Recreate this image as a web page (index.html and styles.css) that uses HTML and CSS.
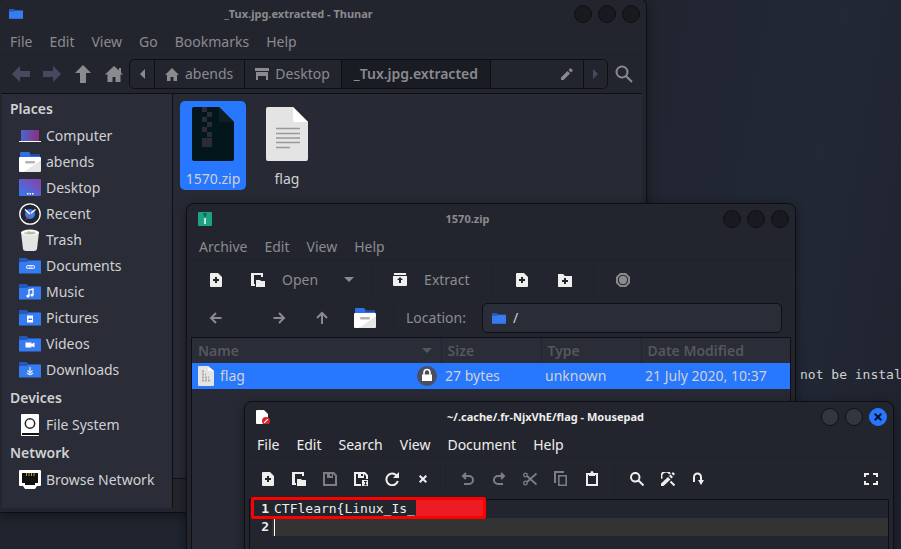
FILE: index.html
```html
<!DOCTYPE html>
<html lang="en">
<head>
<meta charset="utf-8">
<title>Desktop</title>
<link rel="stylesheet" href="styles.css">
</head>
<body>
<svg class="defs" aria-hidden="true">
  <defs>
    <linearGradient id="purple" x1="0" y1="1" x2="1" y2="0"><stop offset="0" stop-color="#367bf0"/><stop offset="1" stop-color="#8a3fa8"/></linearGradient>
    <linearGradient id="magenta" x1="0" y1="0" x2="1" y2="0"><stop offset="0" stop-color="#4a66d0"/><stop offset="1" stop-color="#8c2f7c"/></linearGradient>
    <linearGradient id="drawer" x1="0" y1="0" x2="1" y2="1"><stop offset=".6" stop-color="#fff"/><stop offset=".61" stop-color="#e6e6e6"/></linearGradient>
  </defs>
  <symbol id="folder" viewBox="0 0 22 16"><path d="M0 1q0-1 1-1h6.500l2 2H21q1 0 1 1v12H0z" fill="#2458ba"/><path d="M1 4h6.500l2-1H22v12.500H0V5z" fill="#367bf0"/></symbol>
  <symbol id="home-folder" viewBox="0 0 22 20"><path d="M1 6V1q0-1 1-1h8q1 0 1.500 2.500H21V6z" fill="#2f70e6"/><path d="M11 3h10v1H11z" fill="#1f4ea8"/><rect y="5" width="22" height="15" rx="1" fill="url(#drawer)"/><rect x="6" y="9" width="10" height="2.500" rx="1" fill="#b4b4b4"/></symbol>
  <symbol id="new" viewBox="0 0 14 14"><path fill-rule="evenodd" d="M2 0h7l4 4v9q0 1-1 1H2q-1 0-1-1V1q0-1 1-1zM6 4v2H4v2h2v2h2V8h2V6H8V4z"/></symbol>
  <symbol id="open" viewBox="0 0 14 14"><path d="M0 0h12v4h-2V2H3v9h1v2H0z"/><path d="M5 7h4l1 1h4v6H5z"/></symbol>
  <symbol id="left" viewBox="0 0 14 14"><path d="M12.500 7H2.500M7 2L2 7l5 5" fill="none" stroke="currentColor" stroke-width="2"/></symbol>
  <symbol id="home" viewBox="0 0 18 16"><path d="M9 0l5 4.500V2h2v4.500L18 8.500h-2.500V16h-5v-5h-3v5h-5V8.500H0z"/></symbol>
  <symbol id="arrow" viewBox="0 0 18 16"><path d="M0 8l8-8v5h10v6H8v5z"/></symbol>
  <symbol id="undo" viewBox="0 0 14 14"><path d="M2 4h6a4 4 0 0 1 0 8H3M5 1L2 4l3 3" fill="none" stroke="currentColor" stroke-width="2"/></symbol>
</svg>

<main class="desktop">
  <p class="terminal">not be instal</p>

  <section class="window files">
    <header class="titlebar">
      <svg class="app" viewBox="0 -3 22 22"><use href="#folder" width="22" height="16"/></svg>
      <h1>_Tux.jpg.extracted - Thunar</h1>
      <div class="controls"><button aria-label="Minimize"></button><button aria-label="Maximize"></button><button aria-label="Close"></button></div>
    </header>
    <nav class="menubar"><button>File</button><button>Edit</button><button>View</button><button>Go</button><button>Bookmarks</button><button>Help</button></nav>
    <div class="toolbar navbar">
      <button class="tool off" aria-label="Back"><svg width="18" height="16"><use href="#arrow"/></svg></button>
      <button class="tool off" aria-label="Forward"><svg width="18" height="16" viewBox="0 0 18 16"><path d="M18 8l-8-8v5H0v6h10v5z"/></svg></button>
      <button class="tool" aria-label="Up"><svg width="16" height="18" viewBox="0 0 16 18"><path d="M8 0l8 8h-5v10H5V8H0z"/></svg></button>
      <button class="tool" aria-label="Home"><svg width="18" height="16"><use href="#home"/></svg></button>
      <div class="pathbar">
        <button class="step" aria-label="Scroll left"><svg width="5" height="10" viewBox="0 0 5 10"><path d="M5 0v10L0 5z"/></svg></button>
        <button class="crumb"><svg width="14" height="13" viewBox="0 0 14 13"><path d="M7 0l7 7h-2v6H8.500V9h-3v4H2V7H0z"/></svg>abends</button>
        <button class="crumb"><svg width="14" height="12" viewBox="0 0 14 12"><path d="M0 0h14v3H0zM1 4h12v8h-2V8H3v4H1z"/></svg>Desktop</button>
        <button class="crumb current">_Tux.jpg.extracted</button>
        <button class="edit" aria-label="Edit path"><svg width="12" height="12" viewBox="0 0 12 12"><path d="M0 9.500V12h2.500L9 5.500 6.500 3zM7.500 2L9 .5q.5-.5 1 0L11.500 2q.5.500 0 1L10 4.500z"/></svg></button>
        <button class="step dim" aria-label="Scroll right"><svg width="5" height="10" viewBox="0 0 5 10"><path d="M0 0v10l5-5z"/></svg></button>
      </div>
      <button class="tool" aria-label="Search"><svg width="18" height="18" viewBox="0 0 18 18"><path d="M11.500 11.500L17 17M12.500 7A5.500 5.500 0 1 1 1.500 7 5.500 5.500 0 0 1 12.500 7z" fill="none" stroke="currentColor" stroke-width="2"/></svg></button>
    </div>
    <div class="browser">
      <aside class="sidebar">
        <h2>Places</h2>
        <a href="#"><svg viewBox="0 0 22 22"><path d="M2 5h18v11H2z" fill="url(#magenta)"/><path d="M0 16h22v1H0z" fill="#fff"/></svg>Computer</a>
        <a href="#"><svg viewBox="0 0 22 22"><use href="#home-folder" y="1" width="22" height="20"/></svg>abends</a>
        <a href="#"><svg viewBox="0 0 22 22"><rect y="2" width="22" height="17" rx="1" fill="url(#purple)"/><path d="M8 16h1.500v1.500H8zM10.500 16H12v1.500h-1.500zM13 16h1.500v1.500H13z" fill="#fff"/></svg>Desktop</a>
        <a href="#"><svg viewBox="0 0 22 22"><circle cx="11" cy="11" r="10.200" fill="#23252e" stroke="#fff" stroke-width="1.300"/><circle cx="11" cy="11" r="5" fill="#367bf0"/><path d="M6 6.500l5 4.500 5.500-4.500" stroke="#fff" stroke-width="1.500" fill="none"/><path d="M12 10l-5 7" stroke="#d33"/></svg>Recent</a>
        <a href="#"><svg viewBox="0 0 22 22"><path d="M2 3l2 17q.3 2 3 2h8q2.700 0 3-2l2-17z" fill="#e4e4e4"/><ellipse cx="11" cy="3.500" rx="9" ry="3" fill="#f8f8f8"/><path d="M5 4.500q1-2 3-1l1-1.500 3 1 3-.5 2 2q-6 2-12 0z" fill="#b8bfa8"/></svg>Trash</a>
        <a href="#"><svg viewBox="0 0 22 22"><use href="#folder" y="3" width="22" height="16"/><path d="M14 10.500H9q-1.500 0-1.500 1.500T9 13.500h5q1.500 0 1.500-1.500T14 10.500M9.500 12h4" fill="none" stroke="#dce8fc" stroke-width="1.200"/></svg>Documents</a>
        <a href="#"><svg viewBox="0 0 22 22"><use href="#folder" y="3" width="22" height="16"/><path d="M10 15V9l4-1v6" fill="none" stroke="#fff" stroke-width="1.300"/><circle cx="9" cy="15" r="1.600" fill="#fff"/><circle cx="13" cy="14" r="1.600" fill="#fff"/></svg>Music</a>
        <a href="#"><svg viewBox="0 0 22 22"><use href="#folder" y="3" width="22" height="16"/><path d="M8 8.500h6v7H8z" fill="#fff"/><path d="M9 13l1.500-2 1 1 1-1 .8 2z" fill="#367bf0"/></svg>Pictures</a>
        <a href="#"><svg viewBox="0 0 22 22"><use href="#folder" y="3" width="22" height="16"/><path d="M6.500 9.500h6v1.500l3-1.500v5l-3-1.500v1.500h-6z" fill="#fff"/></svg>Videos</a>
        <a href="#"><svg viewBox="0 0 22 22"><use href="#folder" y="3" width="22" height="16"/><path d="M11 8v6M8.500 11.500L11 14l2.500-2.500M8 14q3 3 6 0" fill="none" stroke="#dce8fc" stroke-width="1.200"/></svg>Downloads</a>
        <h2>Devices</h2>
        <a href="#"><svg viewBox="0 0 22 22"><rect x="2" y="0" width="18" height="22" rx="1" fill="#fff"/><path d="M3 19h17v2H3z" fill="#111"/><circle cx="11" cy="9.500" r="4.700" fill="none" stroke="#222" stroke-width="1.500"/></svg>File System</a>
        <h2>Network</h2>
        <a href="#"><svg viewBox="0 0 22 22"><path d="M1 1h20q1 0 1 1v14q0 1-1 1h-3l-2 3H6l-2-3H1q-1 0-1-1V2q0-1 1-1z" fill="#fff"/><path d="M3 4h16v10h-3v2H6v-2H3z" fill="#111"/><path d="M7.500 4v3M10 4v3M12.500 4v3M15 4v3" stroke="#b8974f"/></svg>Browse Network</a>
      </aside>
      <div class="content">
        <div class="icons">
          <figure class="selected">
            <svg width="42" height="54" viewBox="0 0 42 54"><path d="M2 0h25l15 15v37q0 2-2 2H2q-2 0-2-2V2q0-2 2-2z" fill="#03161c"/><path d="M27 0l15 15H27z" fill="#0e2024"/><path d="M10 0h5v5h-5zM15 5h5v5h-5zM10 10h5v5h-5zM15 15h5v5h-5zM10 20h5v5h-5zM15 25h5v5h-5zM10 31h10v9H10z" fill="#2b2c38"/></svg>
            <figcaption>1570.zip</figcaption>
          </figure>
          <figure>
            <svg width="42" height="54" viewBox="0 0 42 54"><path d="M2 0h25l15 15v37q0 2-2 2H2q-2 0-2-2V2q0-2 2-2z" fill="#e4e4e4"/><path d="M27 0l15 15H29q-2 0-2-2z" fill="#fff"/><path d="M10 21.500h24M10 26.500h24M10 31h24M10 35.500h24M10 40.500h14" stroke="#999" stroke-width="1.300"/></svg>
            <figcaption>flag</figcaption>
          </figure>
        </div>
        <div class="status"></div>
      </div>
    </div>
  </section>

  <section class="window archive">
    <header class="titlebar">
      <svg class="app" viewBox="0 0 14 14"><rect width="14" height="14" rx="1" fill="#1fa184"/><path d="M5 1h4L7.500 5h-1z" fill="#0d6b58"/><path d="M6 6h2v6H6z" fill="#bfe8dc"/></svg>
      <h1>1570.zip</h1>
      <div class="controls"><button aria-label="Minimize"></button><button aria-label="Maximize"></button><button aria-label="Close"></button></div>
    </header>
    <nav class="menubar"><button>Archive</button><button>Edit</button><button>View</button><button>Help</button></nav>
    <div class="toolbar actions">
      <button class="tool bright" aria-label="New archive"><svg width="14" height="14"><use href="#new"/></svg></button>
      <button class="labelled"><svg width="14" height="14"><use href="#open"/></svg>Open</button>
      <button class="tool drop" aria-label="Recent archives"><svg width="10" height="5" viewBox="0 0 10 5"><path d="M0 0h10L5 5z"/></svg></button>
      <span class="sep"></span>
      <button class="labelled"><svg width="14" height="14" viewBox="0 0 14 14"><path fill-rule="evenodd" d="M1 0h12v2H1zM0 3h14v9q0 1-1 1H1q-1 0-1-1zM7 4L4 7h2v3h2V7h2z"/></svg>Extract</button>
      <span class="sep"></span>
      <button class="tool bright" aria-label="Add files"><svg width="14" height="14"><use href="#new"/></svg></button>
      <button class="tool bright" aria-label="Add folder"><svg width="14" height="14" viewBox="0 0 14 14"><path fill-rule="evenodd" d="M0 1h5l2 2h7v11H0zM6 5v2H4v2h2v2h2V9h2V7H8V5z"/></svg></button>
      <span class="sep"></span>
      <button class="tool" aria-label="Stop"><svg width="14" height="14" viewBox="0 0 14 14"><path fill-rule="evenodd" d="M4 0h6l4 4v6l-4 4H4l-4-4V4zM7 1.800a5.200 5.200 0 1 0 0 10.400A5.200 5.200 0 0 0 7 1.800z"/><circle cx="7" cy="7" r="4.200"/></svg></button>
    </div>
    <div class="toolbar location">
      <button class="tool back" aria-label="Back"><svg width="14" height="14"><use href="#left"/></svg></button>
      <button class="tool" aria-label="Forward"><svg width="14" height="14" viewBox="0 0 14 14"><path d="M1.500 7h10M7 2l5 5-5 5" fill="none" stroke="currentColor" stroke-width="2"/></svg></button>
      <button class="tool" aria-label="Up"><svg width="14" height="14" viewBox="0 0 14 14"><path d="M7 13V2M2 7l5-5 5 5" fill="none" stroke="currentColor" stroke-width="2"/></svg></button>
      <button class="tool" aria-label="Home"><svg width="22" height="20"><use href="#home-folder"/></svg></button>
      <span class="sep"></span>
      <label for="location">Location:</label>
      <div class="field"><svg width="14" height="11" viewBox="0 0 22 16" preserveAspectRatio="none"><use href="#folder" width="22" height="16"/></svg><input id="location" type="text" value="/"></div>
    </div>
    <div class="listing">
      <table>
        <colgroup><col><col class="narrow"><col class="narrow"><col class="date"></colgroup>
        <thead><tr><th><div class="cell">Name<svg width="10" height="5" viewBox="0 0 10 5"><path d="M0 0h10L5 5z"/></svg></div></th><th>Size</th><th>Type</th><th>Date Modified</th></tr></thead>
        <tbody><tr>
          <td class="name"><div class="cell"><svg width="16" height="20" viewBox="0 0 16 20"><path d="M1 0h9l6 5v14q0 1-1 1H1q-1 0-1-1V1q0-1 1-1z" fill="#e4e4e4"/><path d="M10 0l6 5h-6z" fill="#fff"/><path d="M4 5.500h2M4 8.500h4M4 11.500h7M4 14.500h8" stroke="#aaa" stroke-dasharray="2 1" stroke-width="2"/></svg><span>flag</span><svg class="lock" width="20" height="20" viewBox="0 0 20 20"><circle cx="10" cy="10" r="10" fill="#4a4e5e"/><path d="M7 9V6.500a3 3 0 0 1 6 0V9" fill="none" stroke="#fff" stroke-width="1.600"/><path d="M5 8.500h10V15H5z" fill="#fff"/></svg></div></td>
          <td>27 bytes</td><td>unknown</td><td>21 July 2020, 10:37</td>
        </tr></tbody>
      </table>
    </div>
  </section>

  <section class="window editor">
    <header class="titlebar">
      <svg class="app" viewBox="0 0 14 14"><path d="M1 0h7l4 4v10H1q-1 0-1-1V1q0-1 1-1z" fill="#fff"/><circle cx="10" cy="11" r="4" fill="#d8232a"/><path d="M8.200 12.800l3.600-3.600" stroke="#fff" stroke-width="1.200"/></svg>
      <h1>~/.cache/.fr-NjxVhE/flag - Mousepad</h1>
      <div class="controls"><button aria-label="Minimize"></button><button aria-label="Maximize"></button><button class="close" aria-label="Close"><svg width="8" height="8" viewBox="0 0 8 8"><path d="M.7.700l6.600 6.600M7.300.700L.7 7.300" stroke="#0b1226" stroke-width="2"/></svg></button></div>
    </header>
    <nav class="menubar"><button>File</button><button>Edit</button><button>Search</button><button>View</button><button>Document</button><button>Help</button></nav>
    <div class="toolbar">
      <button class="tool" aria-label="New"><svg width="14" height="14"><use href="#new"/></svg></button>
      <button class="tool" aria-label="Open"><svg width="14" height="14"><use href="#open"/></svg></button>
      <button class="tool off" aria-label="Save"><svg width="14" height="14" viewBox="0 0 14 14"><path fill-rule="evenodd" d="M0 0h11l3 3v11H0zM2 2v10h10V4l-2-2v4H4V2zM7 2v2h2V2z"/></svg></button>
      <button class="tool" aria-label="Save as"><svg width="14" height="14" viewBox="0 0 14 14"><path fill-rule="evenodd" d="M0 0h11l3 3v4h-2V4l-2-2v4H4V2H2v10h5v2H0zM7 2v2h2V2z"/><path d="M8 8h6v6H8z"/><path d="M10 9.500h3M11.500 9v4M10 12.800h3" stroke="#23252e"/></svg></button>
      <button class="tool" aria-label="Reload"><svg width="14" height="14" viewBox="0 0 14 14"><path d="M11.500 3.500A5.800 5.800 0 1 0 12.800 9" fill="none" stroke="currentColor" stroke-width="2"/><path d="M14 0v6H8z"/></svg></button>
      <button class="tool" aria-label="Close file"><svg width="8" height="8" viewBox="0 0 8 8"><path d="M.7.700l6.600 6.600M7.300.700L.7 7.300" stroke="currentColor" stroke-width="2"/></svg></button>
      <span class="sep"></span>
      <button class="tool off" aria-label="Undo"><svg width="14" height="14"><use href="#undo"/></svg></button>
      <button class="tool off" aria-label="Redo"><svg width="14" height="14" viewBox="0 0 14 14"><path d="M12 4H6a4 4 0 0 0 0 8h5M9 1l3 3-3 3" fill="none" stroke="currentColor" stroke-width="2"/></svg></button>
      <button class="tool off" aria-label="Cut"><svg width="14" height="14" viewBox="0 0 14 14"><path d="M4 4l9.500 8.500M4 10l9.500-8.500" stroke="currentColor" stroke-width="1.800"/><circle cx="2.500" cy="3" r="1.800" fill="none" stroke="currentColor" stroke-width="1.300"/><circle cx="2.500" cy="11" r="1.800" fill="none" stroke="currentColor" stroke-width="1.300"/></svg></button>
      <button class="tool off" aria-label="Copy"><svg width="14" height="16" viewBox="0 0 14 16"><path d="M1 12V1h9" fill="none" stroke="currentColor" stroke-width="2"/><path d="M4.800 4.800h7.400v9.400H4.800z" fill="none" stroke="currentColor" stroke-width="1.600"/></svg></button>
      <button class="tool" aria-label="Paste"><svg width="12" height="15" viewBox="0 0 12 15"><path d="M1 3h10v11H1z" fill="none" stroke="currentColor" stroke-width="2"/><path d="M3 2h1.500q0-2 1.500-2t1.500 2H9v3H3z"/></svg></button>
      <span class="sep"></span>
      <button class="tool" aria-label="Find"><svg width="14" height="14" viewBox="0 0 14 14"><path d="M8.500 8.500l5 5M9.500 5.200a4.200 4.200 0 1 1-8.500 0 4.200 4.200 0 0 1 8.500 0z" fill="none" stroke="currentColor" stroke-width="2"/></svg></button>
      <button class="tool" aria-label="Find and replace"><svg width="14" height="14" viewBox="0 0 14 14"><path d="M1 6.500a4.500 4.500 0 0 1 8-4.500M9.500 9.500l4 4" fill="none" stroke="currentColor" stroke-width="2"/><path d="M0 11.500V14h2.500l7-6.500L7 5zM8 4l1.500-1.500L12 5l-1.500 1.500zM10.500 1.500L12 0l2 2-1.500 1.500z"/></svg></button>
      <button class="tool" aria-label="Go to"><svg width="14" height="14" viewBox="0 0 14 14"><path d="M2 10V5a3.500 3.500 0 0 1 7 0v5" fill="none" stroke="currentColor" stroke-width="2"/><path d="M6 8h6l-3 5z"/></svg></button>
      <button class="tool end" aria-label="Fullscreen"><svg width="14" height="12" viewBox="0 0 14 12"><path d="M1 4V1h4M9 1h4v3M13 8v3H9M5 11H1V8" fill="none" stroke="currentColor" stroke-width="2"/></svg></button>
    </div>
    <div class="document">
      <ol class="gutter"><li>1</li><li>2</li></ol>
      <textarea aria-label="Document text" spellcheck="false">CTFlearn{Linux_Is_
</textarea>
      <span class="caret"></span>
      <div class="redaction"></div>
    </div>
  </section>
</main>
</body>
</html>
```
FILE: styles.css
```css
* { box-sizing: border-box; }

body {
  margin: 0;
  overflow: hidden;
  font: 14px/18px "Noto Sans", "Open Sans", sans-serif;
  color: #d0d1d3;
}

button, input, textarea {
  margin: 0;
  padding: 0;
  border: 0;
  background: none;
  font: inherit;
  color: inherit;
}

h1, h2, p, figure, ol { margin: 0; padding: 0; }
svg { display: block; flex: none; fill: currentColor; }
.defs { position: absolute; width: 0; height: 0; }

.desktop {
  position: relative;
  height: 100vh;
  overflow: hidden;
  background: linear-gradient(100deg, #20242f 60%, #222835 85%, #20232e);
}

.terminal {
  position: absolute;
  left: 800px;
  top: 366px;
  font: 13px/18px "DejaVu Sans Mono", monospace;
  white-space: nowrap;
}

/* Windows */
.window {
  position: absolute;
  display: flex;
  flex-direction: column;
  padding: 0 4px;
  border: 1px solid #0e0f14;
  border-radius: 8px 8px 0 0;
  background: #23252e;
  color: #8a8b8f;
  box-shadow: 0 3px 12px rgba(0, 0, 0, .4);
}

.files { left: -3px; right: 254px; top: -2px; height: 515px; }
.archive { left: 186px; right: 105px; top: 203px; height: 400px; }
.editor { left: 244px; right: 7px; top: 401px; height: 300px; color: #eeeeec; }

.titlebar {
  display: flex;
  align-items: center;
  height: 29px;
  padding: 0 2px 0 7px;
}

.titlebar h1 {
  flex: 1;
  text-align: center;
  font-size: 11px;
  line-height: 18px;
  font-weight: 700;
}

.app { width: 14px; height: 14px; }
.controls { display: flex; gap: 6px; }

.controls button {
  display: grid;
  place-items: center;
  width: 18px;
  height: 18px;
  border: 1px solid #0f1014;
  border-radius: 50%;
  background: #191a1f;
}

.editor .controls button { background: #333642; }
.editor .controls .close { border-color: #2777ff; background: #2777ff; }

.menubar {
  display: flex;
  gap: 1px;
  height: 27px;
  padding-top: 2px;
  border-bottom: 1px solid #1f2129;
}

.menubar button { padding: 0 8px; }

.toolbar { display: flex; align-items: center; height: 38px; padding: 0 3px; }
.editor .toolbar { height: 41px; }

.tool {
  display: grid;
  place-items: center;
  flex: none;
  width: 31px;
  height: 30px;
}

.tool.end { margin-left: auto; }
.tool.off { color: #7d7e82; }
.navbar .off { color: #464a5e; }
.bright, .labelled svg { color: #eeeeec; }
.sep { width: 1px; height: 30px; margin: 0 6px 0 7px; background: #1f2129; }

/* File manager */
.pathbar {
  display: flex;
  flex: 1;
  height: 30px;
  border: 1px solid #0e0f14;
  border-radius: 5px;
  overflow: hidden;
}

.pathbar button + button { border-left: 1px solid #0e0f14; }
.pathbar .current + .edit { border-left-color: #0e0f14; }
.step, .crumb { display: flex; align-items: center; justify-content: center; }
.step { width: 24px; }
.step.dim { color: #464a5e; }
.crumb { gap: 6px; padding: 0 11px 0 10px; }
.crumb.current { padding: 0 12px; background: #1a1c23; font-weight: 600; }
.edit { display: flex; flex: 1; align-items: center; justify-content: flex-end; padding-right: 10px; }

.browser {
  display: flex;
  flex: 1;
  margin-bottom: 4px;
  border-top: 1px solid #0e0f14;
}

.sidebar {
  width: 171px;
  border-right: 1px solid #0e0f14;
  background: #2a2c37;
  color: #d0d1d3;
}

.sidebar h2 { padding-left: 8px; font-size: 14px; line-height: 29px; font-weight: 600; }

.sidebar a {
  display: flex;
  align-items: center;
  gap: 5px;
  height: 26px;
  padding-left: 17px;
  color: inherit;
  text-decoration: none;
}

.sidebar svg { width: 22px; height: 22px; }

.content { display: flex; flex: 1; flex-direction: column; background: #272934; }
.icons { display: flex; flex: 1; align-items: flex-start; gap: 8px; padding: 7px; }

.icons figure {
  display: flex;
  flex-direction: column;
  align-items: center;
  gap: 9px;
  width: 66px;
  padding: 6px 0 2px;
  border-radius: 5px;
  color: #d0d1d3;
}

.icons .selected { background: #2777ff; }
.status { height: 30px; border-top: 1px solid #0e0f14; background: #23252b; }

/* Archive manager */
.actions { height: 39px; }
.archive .tool { width: 43px; }
.archive .drop { width: 30px; }
.archive .sep { margin: 0 7px; }
.archive .back { margin-right: 20px; }
.labelled { display: flex; align-items: center; gap: 17px; padding: 0 16px 0 14px; }
.location label { margin: 0 16px 0 5px; }

.field {
  display: flex;
  flex: 1;
  align-items: center;
  gap: 7px;
  height: 30px;
  margin-right: 6px;
  padding: 0 9px;
  border: 1px solid #0e0f14;
  border-radius: 5px;
  background: #2a2c37;
}

.field input { flex: 1; min-width: 0; color: #d0d1d3; }

.listing { flex: 1; border: 1px solid #0e0f14; background: #272934; }
.listing table { width: 100%; border-collapse: collapse; table-layout: fixed; }
.narrow { width: 100px; }
.date { width: 149px; }

.listing th {
  height: 25px;
  padding: 0 6px;
  border-right: 1px solid #23252e;
  background: #2a2c37;
  color: #55575e;
  font-weight: 600;
  text-align: left;
}

.listing th:last-child { border-right: 0; }
.listing th .cell { justify-content: space-between; padding-right: 3px; }
.listing td { height: 26px; padding: 0 4px; background: #2777ff; color: #d0d1d3; white-space: nowrap; }
.listing td.name { padding-left: 6px; }
.cell { display: flex; align-items: center; gap: 6px; }
.lock { margin-left: auto; }

/* Text editor */
.document {
  position: relative;
  display: flex;
  flex: 1;
  border: 1px solid #0e0f14;
  background: #23252e;
  font: 13px/18px "DejaVu Sans Mono", monospace;
}

.gutter { width: 22px; padding-right: 3px; list-style: none; text-align: right; font-weight: bold; }

.document textarea {
  flex: 1;
  padding: 0 0 0 2px;
  outline: 0;
  resize: none;
  overflow: hidden;
  background: linear-gradient(#333, #333) 0 18px / 100% 18px no-repeat;
}

.caret { position: absolute; left: 24px; top: 19px; width: 1px; height: 17px; background: #fff; }

.redaction {
  position: absolute;
  left: 1px;
  top: -3px;
  width: 235px;
  height: 22px;
  border: 3px solid #f00;
  border-radius: 2px;
  background: linear-gradient(#ed1c24, #ed1c24) right / 67px 100% no-repeat;
}
```
